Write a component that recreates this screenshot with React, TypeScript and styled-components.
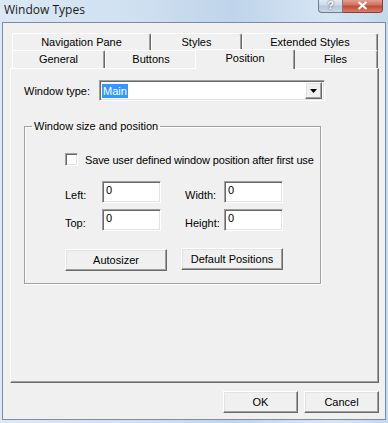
import React from "react";
import styled, { createGlobalStyle, css } from "styled-components";

const Global = createGlobalStyle`
  html, body { margin: 0; padding: 0; background: #c9dcef; }
  body { font-family: "Liberation Sans", Arial, sans-serif; font-size: 11px; color: #000; }
  * { box-sizing: border-box; }
`;

const sunken = css`
  border-style: solid;
  border-width: 1px;
  border-color: #a0a0a0 #ffffff #ffffff #a0a0a0;
  box-shadow: inset 1px 1px 0 #696969, inset -1px -1px 0 #e3e3e3;
`;

const raised = css`
  border-style: solid;
  border-width: 1px;
  border-color: #ffffff #696969 #696969 #ffffff;
  box-shadow: inset -1px -1px 0 #a0a0a0, inset 1px 1px 0 #e3e3e3;
  background: #f0f0f0;
`;

const Window = styled.div`
  width: 388px;
  height: 423px;
  display: flex;
  flex-direction: column;
  background: linear-gradient(90deg, #dce8f5 0%, #cfe0f1 35%, #bfd4ea 60%, #d6e5f4 85%, #c4d8ec 100%);
  overflow: hidden;
`;

const TitleBar = styled.div`
  height: 22px;
  display: flex;
  align-items: flex-start;
  justify-content: space-between;
  padding-left: 4px;
  padding-right: 5px;
`;

const Title = styled.div`
  font-family: "Open Sans", "Liberation Sans", sans-serif;
  font-size: 12px;
  line-height: 19px;
  color: #1b1b1b;
`;

const Caps = styled.div`
  display: flex;
  margin-top: -1px;
`;

const CapButton = styled.div<{ $close?: boolean }>`
  height: 14px;
  width: ${(p) => (p.$close ? 40 : 25)}px;
  border: 1px solid ${(p) => (p.$close ? "#8c3a32" : "#6d7d90")};
  border-top: none;
  border-radius: ${(p) => (p.$close ? "0 0 4px 0" : "0 0 0 4px")};
  border-left-width: ${(p) => (p.$close ? 0 : 1)}px;
  background: ${(p) =>
    p.$close
      ? "linear-gradient(180deg, #e3a99f 0%, #d0735f 45%, #c24a31 55%, #d2806c 100%)"
      : "linear-gradient(180deg, #e6edf5 0%, #cfdae6 45%, #b8c8da 55%, #c9d7e6 100%)"};
  display: flex;
  align-items: center;
  justify-content: center;
  color: #fff;
  font-size: 11px;
  font-weight: bold;
  line-height: 1;
  text-shadow: 0 0 2px #333;
`;

const Client = styled.div`
  flex: 1;
  margin: 0 2px 3px 2px;
  border: 1px solid #7d8da0;
  background: #f0f0f0;
  display: flex;
  flex-direction: column;
  padding: 10px 6px 0 7px;
`;

const TabRow = styled.div<{ $front?: boolean }>`
  display: flex;
  margin-left: 2px;
  height: ${(p) => (p.$front ? 17 : 18)}px;
  position: relative;
  z-index: ${(p) => (p.$front ? 2 : 1)};
  align-items: flex-end;
`;

const Tab = styled.div<{ $w: number; $active?: boolean }>`
  width: ${(p) => p.$w}px;
  height: ${(p) => (p.$active ? 20 : 18)}px;
  margin: ${(p) => (p.$active ? "0 -2px -1px -2px" : "0")};
  padding-bottom: ${(p) => (p.$active ? 3 : 1)}px;
  background: #f0f0f0;
  border-top: 1px solid #ffffff;
  border-left: 1px solid #ffffff;
  border-right: 1px solid #696969;
  box-shadow: inset -1px 0 0 #a0a0a0;
  border-radius: 2px 2px 0 0;
  position: relative;
  z-index: ${(p) => (p.$active ? 3 : 1)};
  display: flex;
  align-items: center;
  justify-content: center;
  white-space: nowrap;
`;

const Panel = styled.div`
  width: 369px;
  height: 315px;
  ${raised};
  box-shadow: inset -1px -1px 0 #a0a0a0;
  position: relative;
  z-index: 1;
  padding: 11px 0 0 13px;
`;

const TypeRow = styled.div`
  display: flex;
  align-items: center;
  gap: 9px;
`;

const Label = styled.span`
  white-space: nowrap;
`;

const Combo = styled.div`
  width: 226px;
  height: 21px;
  background: #fff;
  ${sunken};
  display: flex;
  align-items: center;
  padding: 2px;
`;

const Selected = styled.span`
  background: #3399ff;
  color: #fff;
  padding: 0 1px;
  line-height: 14px;
`;

const DropButton = styled.div`
  margin-left: auto;
  width: 17px;
  height: 17px;
  ${raised};
  display: flex;
  align-items: center;
  justify-content: center;
`;

const Group = styled.fieldset`
  margin: 19px 0 0 0;
  width: 297px;
  height: 164px;
  padding: 0;
  border: 1px solid #a0a0a0;
  box-shadow: inset 1px 1px 0 #fff, 1px 1px 0 #fff;
  position: relative;
  display: flex;
  flex-direction: column;
  padding-left: 40px;
`;

const Legend = styled.legend`
  padding: 0 2px;
  margin-left: -33px;
  line-height: 12px;
`;

const CheckRow = styled.label`
  display: flex;
  align-items: center;
  gap: 7px;
  margin-top: 21px;
  white-space: nowrap;
  letter-spacing: -0.15px;
`;

const CheckBox = styled.span`
  width: 13px;
  height: 13px;
  flex: none;
  background: #fff;
  ${sunken};
`;

const Fields = styled.div`
  display: grid;
  grid-template-columns: 37px 59px 24px 39px 59px;
  grid-auto-rows: 22px;
  row-gap: 6px;
  align-items: end;
  margin-top: 15px;
`;

const FieldLabel = styled.span<{ $col: number }>`
  grid-column: ${(p) => p.$col};
  align-self: center;
  padding-top: 6px;
`;

const Input = styled.div<{ $col: number }>`
  grid-column: ${(p) => p.$col};
  height: 22px;
  background: #fff;
  ${sunken};
  padding: 1px 3px;
  line-height: 14px;
`;

const ButtonRow = styled.div`
  display: flex;
  gap: 14px;
  margin-top: 17px;
  align-items: flex-start;
`;

const Button = styled.div<{ $w: number; $shift?: number }>`
  width: ${(p) => p.$w}px;
  height: 22px;
  ${raised};
  display: flex;
  align-items: center;
  justify-content: center;
  margin-top: ${(p) => p.$shift || 0}px;
  white-space: nowrap;
`;

const Footer = styled.div`
  display: flex;
  justify-content: flex-end;
  gap: 6px;
  margin-top: 8px;
  padding-right: 0;
`;

export default function App() {
  return (
    <>
      <Global />
      <Window>
        <TitleBar>
          <Title>Window Types</Title>
          <Caps>
            <CapButton>?</CapButton>
            <CapButton $close>
              <svg width="11" height="9" viewBox="0 0 11 9">
                <path d="M1.5 1 L9.5 8 M9.5 1 L1.5 8" stroke="#fff" strokeWidth="2.2" />
              </svg>
            </CapButton>
          </Caps>
        </TitleBar>
        <Client>
          <TabRow>
            <Tab $w={139}>Navigation Pane</Tab>
            <Tab $w={91}>Styles</Tab>
            <Tab $w={136}>Extended Styles</Tab>
          </TabRow>
          <TabRow $front>
            <Tab $w={93}>General</Tab>
            <Tab $w={92}>Buttons</Tab>
            <Tab $w={100} $active>Position</Tab>
            <Tab $w={85}>Files</Tab>
          </TabRow>
          <Panel>
            <TypeRow>
              <Label>Window type:</Label>
              <Combo>
                <Selected>Main</Selected>
                <DropButton>
                  <svg width="7" height="4" viewBox="0 0 7 4">
                    <path d="M0 0 H7 L3.5 4 Z" fill="#000" />
                  </svg>
                </DropButton>
              </Combo>
            </TypeRow>
            <Group>
              <Legend>Window size and position</Legend>
              <CheckRow>
                <CheckBox />
                <span>Save user defined window position after first use</span>
              </CheckRow>
              <Fields>
                <FieldLabel $col={1}>Left:</FieldLabel>
                <Input $col={2}>0</Input>
                <FieldLabel $col={4}>Width:</FieldLabel>
                <Input $col={5}>0</Input>
                <FieldLabel $col={1}>Top:</FieldLabel>
                <Input $col={2}>0</Input>
                <FieldLabel $col={4}>Height:</FieldLabel>
                <Input $col={5}>0</Input>
              </Fields>
              <ButtonRow>
                <Button $w={102} $shift={1}>Autosizer</Button>
                <Button $w={102}>Default Positions</Button>
              </ButtonRow>
            </Group>
          </Panel>
          <Footer>
            <Button $w={75}>OK</Button>
            <Button $w={75}>Cancel</Button>
          </Footer>
        </Client>
      </Window>
    </>
  );
}
